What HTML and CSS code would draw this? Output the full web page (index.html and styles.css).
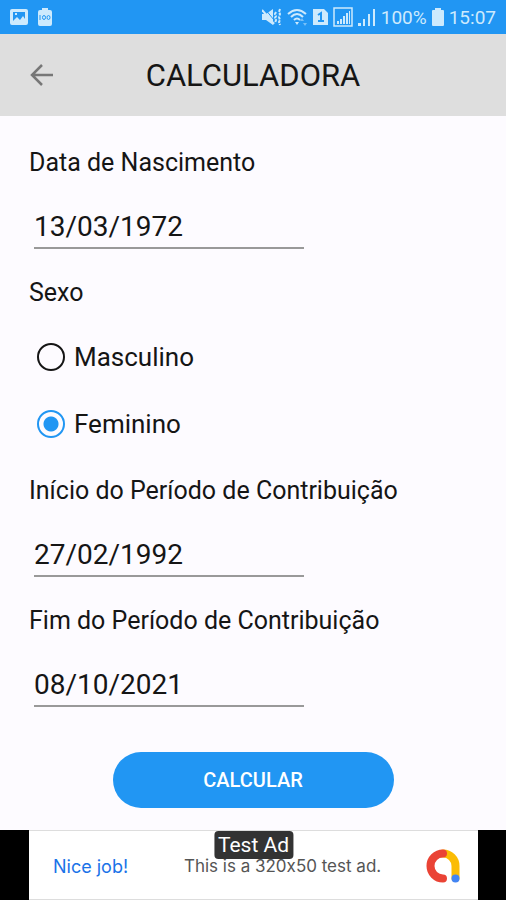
FILE: index.html
```html
<!DOCTYPE html>
<html lang="pt-BR">
<head>
    <meta charset="UTF-8">
    <meta name="viewport" content="width=device-width, initial-scale=1.0">
    <title>Calculadora</title>
    <link rel="stylesheet" href="styles.css">
</head>
<body>
    <!-- Status bar -->
    <div class="status-bar">
        <div class="status-group">
            <svg width="18" height="18" viewBox="0 0 18 18">
                <path fill="currentColor" fill-rule="evenodd" d="M2 1h14a2 2 0 0 1 2 2v12a2 2 0 0 1-2 2H2a2 2 0 0 1-2-2V3a2 2 0 0 1 2-2zM3 4v9l4-4 3 3 3-4 2 3V4zM5 5h2v2H5z"/>
            </svg>
            <svg width="14" height="20" viewBox="0 0 14 20">
                <path fill="currentColor" d="M4 1h6v2h2q2 0 2 2v12q0 2-2 2H2q-2 0-2-2V5q0-2 2-2h2z"/>
                <g fill="none" stroke="#2196f3">
                    <path d="M2 8v5"/>
                    <ellipse cx="6" cy="10.5" rx="1.5" ry="2"/>
                    <ellipse cx="10.5" cy="10.5" rx="1.5" ry="2"/>
                </g>
            </svg>
        </div>
        <div class="status-group status-right">
            <svg width="20" height="20" viewBox="0 0 20 20">
                <path fill="currentColor" d="M0 7h4l7-5v16l-7-5H0z"/>
                <path fill="none" stroke="#2196f3" stroke-width="1" d="M3 2l9 11"/>
                <path fill="none" stroke="currentColor" stroke-width="2" d="M0 3l12 14"/>
                <path fill="none" stroke="currentColor" stroke-width="2" stroke-dasharray="3 1" d="M14 5l-1 2 1 2-1 2 1 2-1 3M18 2l-1 3 1 2-1 3 1 3-1 2 1 3"/>
            </svg>
            <svg width="21" height="20" viewBox="0 0 21 20">
                <g fill="none" stroke="currentColor" stroke-width="2">
                    <path d="M1 7q9-8 18 0M4 10q6-6 12 0M7 13q3-3 6 0"/>
                </g>
                <path fill="currentColor" d="M8 15h4l-2 3z"/>
                <path fill="currentColor" opacity=".5" d="M13 14h4l-2-3zM16 16h4l-2 3z"/>
            </svg>
            <svg width="15" height="18" viewBox="0 0 15 18">
                <path fill="currentColor" d="M0 1h11l4 4v12H0z"/>
                <path fill="none" stroke="#2196f3" stroke-width="2" d="M5 7l3-2v8M5 13h6"/>
            </svg>
            <svg width="20" height="20" viewBox="0 0 20 20">
                <path fill="none" stroke="currentColor" stroke-width="1.5" d="M1 1h18v18H1z"/>
                <path fill="currentColor" d="M4 14h2v3H4zM7 12h2v5H7zM10 9h2v8h-2zM13 6h2v11h-2zM16 4h1v13h-1z"/>
            </svg>
            <svg width="18" height="20" viewBox="0 0 18 20">
                <path fill="currentColor" d="M0 16h3v3H0zM5 12h2v7H5zM10 7h2v12h-2zM15 2h2v17h-2z"/>
            </svg>
            <span>100%</span>
            <svg width="12" height="18" viewBox="0 0 12 18">
                <path fill="currentColor" d="M3 0h6v2h2q1 0 1 1v14q0 1-1 1H1q-1 0-1-1V3q0-1 1-1h2z"/>
            </svg>
            <span>15:07</span>
        </div>
    </div>

    <!-- App bar -->
    <header class="app-bar">
        <button type="button" class="back-button" aria-label="Voltar">
            <svg width="24" height="24" viewBox="0 0 24 24" fill="none" stroke="currentColor" stroke-width="2.5">
                <path d="M24 12H3M13 2L3 12l10 10"/>
            </svg>
        </button>
        <h1>CALCULADORA</h1>
    </header>

    <!-- Form -->
    <form class="calc-form">
        <div class="field">
            <label for="birth">Data de Nascimento</label>
            <input type="text" id="birth" name="birth" value="13/03/1972">
        </div>

        <fieldset class="options">
            <legend>Sexo</legend>
            <label class="option">
                <input type="radio" name="sex" value="m">
                Masculino
            </label>
            <label class="option">
                <input type="radio" name="sex" value="f" checked>
                Feminino
            </label>
        </fieldset>

        <div class="field">
            <label for="start">Início do Período de Contribuição</label>
            <input type="text" id="start" name="start" value="27/02/1992">
        </div>

        <div class="field">
            <label for="end">Fim do Período de Contribuição</label>
            <input type="text" id="end" name="end" value="08/10/2021">
        </div>

        <button type="submit" class="submit-button">CALCULAR</button>
    </form>

    <!-- Ad banner -->
    <div class="ad-bar">
        <div class="ad">
            <span class="ad-tag">Test Ad</span>
            <a href="#" class="ad-link">Nice job!</a>
            <span class="ad-text">This is a 320x50 test ad.</span>
            <svg class="ad-logo" width="36" height="36" viewBox="0 0 36 36" fill="none" stroke-width="8" stroke-linecap="round">
                <path stroke="#fbbc04" d="M18 5.5a12.5 12.5 0 0 1 12.5 12.5v12"/>
                <path stroke="#ea4335" d="M18 5.5a12.5 12.5 0 0 0 0 25"/>
                <circle cx="30.5" cy="30.5" r="4" fill="#4285f4"/>
            </svg>
        </div>
    </div>
</body>
</html>
```
FILE: styles.css
```css
* {
    box-sizing: border-box;
}

body {
    display: flex;
    flex-direction: column;
    min-height: 100vh;
    margin: 0;
    font-family: Roboto, sans-serif;
    color: #151515;
    background-color: #fdfbff;
}

/* Status bar */
.status-bar {
    display: flex;
    justify-content: space-between;
    align-items: center;
    height: 34px;
    padding: 0 10px;
    font-size: 19px;
    color: #cdeafd;
    background-color: #2196f3;
}

.status-group {
    display: flex;
    align-items: center;
    gap: 10px;
}

.status-right {
    gap: 5px;
}

/* App bar */
.app-bar {
    display: grid;
    grid-template-columns: 24px 1fr 24px;
    align-items: center;
    height: 82px;
    padding: 0 29px;
    background-color: #dedede;
}

.app-bar h1 {
    margin: 0;
    font-size: 31px;
    font-weight: 400;
    text-align: center;
}

.back-button {
    display: flex;
    padding: 0;
    border: none;
    color: #777;
    background: none;
    cursor: pointer;
}

/* Form */
.calc-form {
    display: flex;
    flex: 1;
    flex-direction: column;
    padding: 31px 29px 22px;
    font-size: 25px;
    line-height: 32px;
}

.field {
    display: flex;
    flex-direction: column;
    margin-bottom: 28px;
}

.field input {
    width: 270px;
    max-width: 100%;
    height: 44px;
    margin: 26px 0 0 5px;
    padding: 0;
    border: none;
    border-bottom: 2px solid #999;
    font-family: inherit;
    font-size: 28px;
    color: inherit;
    background: none;
    outline: none;
}

.options {
    margin: 0 0 18px;
    padding: 0;
    border: none;
}

.options legend {
    margin-bottom: 14px;
    padding: 0;
}

.option {
    display: flex;
    align-items: center;
    gap: 9px;
    height: 67px;
    padding-left: 8px;
    font-size: 26px;
}

/* Radio button */
.option input {
    width: 28px;
    height: 28px;
    margin: 0;
    border: 2px solid #151515;
    border-radius: 50%;
    appearance: none;
}

.option input:checked {
    border-color: #2196f3;
    background: radial-gradient(circle, #2196f3 7px, transparent 8px);
}

.submit-button {
    align-self: center;
    width: 281px;
    height: 56px;
    margin-top: 17px;
    border: none;
    border-radius: 28px;
    font-family: inherit;
    font-size: 20px;
    font-weight: 500;
    color: #fff;
    background-color: #2196f3;
    cursor: pointer;
}

/* Ad banner */
.ad-bar {
    padding: 0 28px 0 29px;
    background-color: #000;
}

.ad {
    position: relative;
    display: flex;
    align-items: center;
    height: 70px;
    padding: 2px 17px 0 24px;
    border: 1px solid #ddd;
    border-width: 1px 0;
    font-family: Inter, sans-serif;
    font-size: 17px;
    font-variant-ligatures: no-contextual;
    color: #555;
    background-color: #fff;
}

.ad-link {
    font-size: 18px;
    color: #1a73e8;
    text-decoration: none;
}

.ad-text {
    flex: 1;
    padding-left: 12px;
    text-align: center;
}

.ad-tag {
    position: absolute;
    top: 0;
    left: 50%;
    padding: 0 4px;
    border-radius: 4px;
    font-family: Roboto, sans-serif;
    font-size: 21px;
    line-height: 28px;
    color: #fff;
    background-color: #333;
    transform: translateX(-50%);
}
```
